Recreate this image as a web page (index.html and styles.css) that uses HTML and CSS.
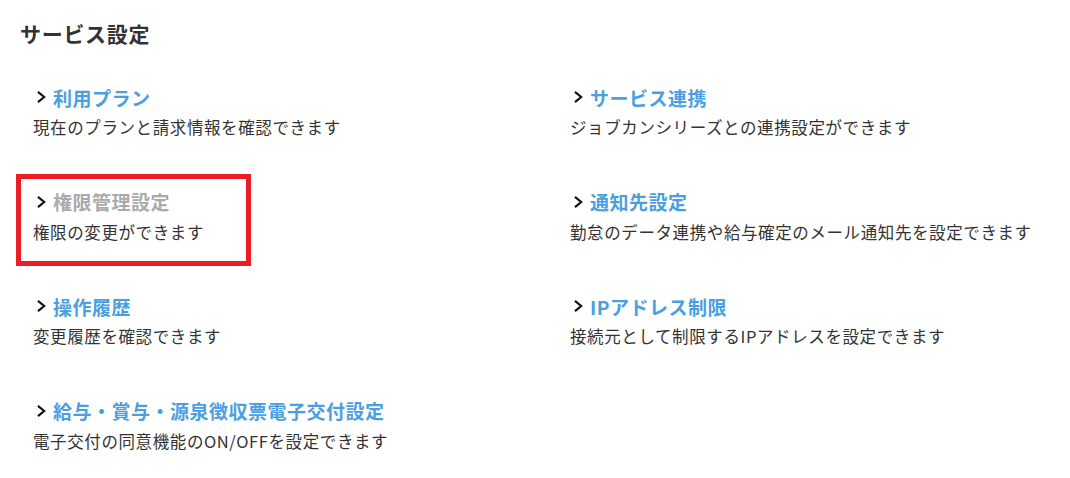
FILE: index.html
```html
<!DOCTYPE html>
<html lang="ja">
<head>
<meta charset="utf-8">
<link rel="stylesheet" href="styles.css">
</head>
<body>
<div class="page">
  <h1 class="title">サービス設定</h1>
  <div class="grid">
    <div class="item">
      <a class="link"><svg class="chev" viewBox="0 0 10 14"><polyline points="2,2 8,7 2,12"/></svg><span>利用プラン</span></a>
      <p class="desc">現在のプランと請求情報を確認できます</p>
    </div>
    <div class="item">
      <a class="link"><svg class="chev" viewBox="0 0 10 14"><polyline points="2,2 8,7 2,12"/></svg><span>サービス連携</span></a>
      <p class="desc">ジョブカンシリーズとの連携設定ができます</p>
    </div>
    <div class="item highlighted">
      <a class="link disabled"><svg class="chev" viewBox="0 0 10 14"><polyline points="2,2 8,7 2,12"/></svg><span>権限管理設定</span></a>
      <p class="desc">権限の変更ができます</p>
    </div>
    <div class="item">
      <a class="link"><svg class="chev" viewBox="0 0 10 14"><polyline points="2,2 8,7 2,12"/></svg><span>通知先設定</span></a>
      <p class="desc">勤怠のデータ連携や給与確定のメール通知先を設定できます</p>
    </div>
    <div class="item">
      <a class="link"><svg class="chev" viewBox="0 0 10 14"><polyline points="2,2 8,7 2,12"/></svg><span>操作履歴</span></a>
      <p class="desc">変更履歴を確認できます</p>
    </div>
    <div class="item">
      <a class="link"><svg class="chev" viewBox="0 0 10 14"><polyline points="2,2 8,7 2,12"/></svg><span>IPアドレス制限</span></a>
      <p class="desc">接続元として制限するIPアドレスを設定できます</p>
    </div>
    <div class="item">
      <a class="link"><svg class="chev" viewBox="0 0 10 14"><polyline points="2,2 8,7 2,12"/></svg><span>給与・賞与・源泉徴収票電子交付設定</span></a>
      <p class="desc">電子交付の同意機能のON/OFFを設定できます</p>
    </div>
  </div>
</div>
</body>
</html>
```
FILE: styles.css
```css
html, body {
  margin: 0;
  padding: 0;
  background: #fff;
}
body {
  font-family: "Noto Sans CJK JP", "Noto Sans", sans-serif;
  color: #333;
}
.page {
  padding: 18px 0 0 20px;
}
.title {
  margin: 0;
  font-size: 21px;
  line-height: 30px;
  font-weight: 700;
  letter-spacing: 0.7px;
  color: #333;
}
.grid {
  margin-top: 35px;
  padding-left: 13px;
  display: grid;
  grid-template-columns: 537px 1fr;
  row-gap: 47.5px;
}
.item {
  position: relative;
  height: 57px;
}
.link {
  display: flex;
  align-items: center;
  gap: 7px;
  padding-left: 4px;
  height: 28px;
  font-size: 19px;
  font-weight: 700;
  letter-spacing: 0.5px;
  color: #4b9fe1;
  cursor: pointer;
}
.link.disabled {
  color: #aaaaaa;
}
.chev {
  width: 9px;
  height: 14px;
  flex: none;
}
.chev polyline {
  fill: none;
  stroke: #111;
  stroke-width: 2.4;
  stroke-linecap: square;
  stroke-linejoin: miter;
}
.desc {
  margin: 4px 0 0;
  font-size: 16.5px;
  line-height: 24px;
  letter-spacing: 0.6px;
  color: #333;
}
.highlighted::after {
  content: "";
  position: absolute;
  top: -14px;
  left: -17px;
  width: 235px;
  height: 92px;
  box-sizing: border-box;
  border: 5px solid #ec1c24;
}
```
